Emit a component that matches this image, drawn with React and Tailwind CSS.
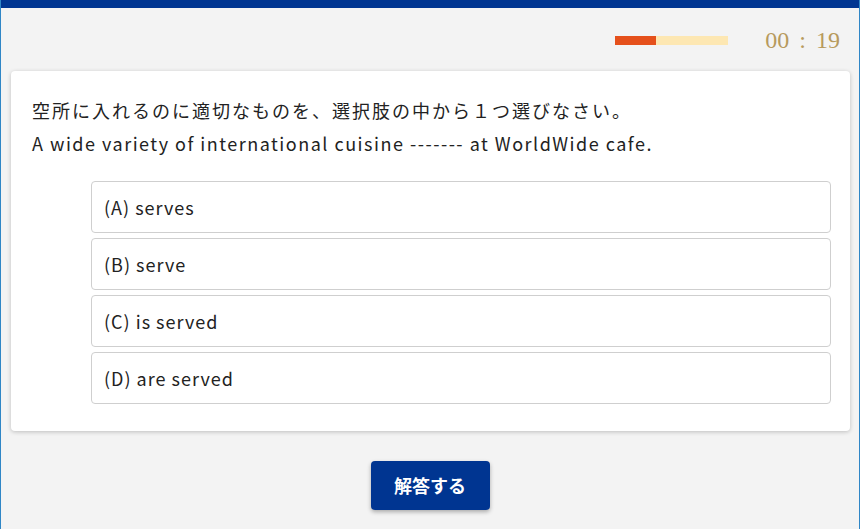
export default function App() {
  const font = { fontFamily: '"Noto Sans CJK JP", "Noto Sans", sans-serif' };
  const options = ["(A) serves", "(B) serve", "(C) is served", "(D) are served"];
  return (
    <div className="w-[860px] h-[529px] bg-[#f3f3f3] border-x border-[#2f86c6] flex flex-col" style={font}>
      <div className="h-2 bg-[#003591] shrink-0" />
      <div className="h-[63px] flex items-center justify-end pr-[19px] pt-[1px]">
        <div className="w-[113px] h-[9px] bg-[#fde7b2] flex mr-[37px]">
          <div className="w-[41px] h-full bg-[#e5501b]" />
        </div>
        <div className="text-[24px] text-[#b79a5d] leading-none" style={{ fontFamily: '"Liberation Serif", serif' }}>
          00<span className="mx-[10px]">:</span>19
        </div>
      </div>
      <div className="ml-[10px] mr-[9px] bg-white rounded-[4px] shadow-[0_1px_4px_rgba(0,0,0,0.22)] pt-[23px] pb-[27px]">
        <div className="pl-[21px] text-[18px] leading-[33px] text-[#222]">
          <div className="tracking-[2px]">空所に入れるのに適切なものを、選択肢の中から１つ選びなさい。</div>
          <div className="tracking-[1.5px]">A wide variety of international cuisine ------- at WorldWide cafe.</div>
        </div>
        <div className="mt-[21px] ml-[80px] mr-[19px] flex flex-col gap-[5px]">
          {options.map((o) => (
            <div key={o} className="h-[52px] border border-[#cfcfcf] rounded-[4px] flex items-center pl-[12px] text-[18px] tracking-[1px] text-[#222]">
              {o}
            </div>
          ))}
        </div>
      </div>
      <div className="flex justify-center mt-[30px]">
        <button className="w-[119px] h-[49px] bg-[#003591] rounded-[4px] text-white text-[18px] font-bold shadow-[0_2px_4px_rgba(0,0,0,0.3)]">
          解答する
        </button>
      </div>
    </div>
  );
}
